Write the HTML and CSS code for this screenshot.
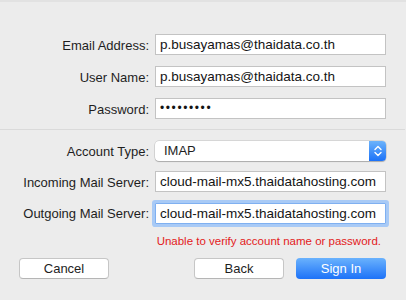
FILE: index.html
```html
<!DOCTYPE html>
<html>
  <head>
    <meta charset="UTF-8">
    <title>Add Account</title>
    <link rel="stylesheet" href="styles.css">
  </head>
  <body>
    <main class="sheet">
      <section class="sheet__group">
        <label class="sheet__label">Email Address:</label>
        <div class="sheet__field">p.busayamas@thaidata.co.th</div>
        <label class="sheet__label">User Name:</label>
        <div class="sheet__field">p.busayamas@thaidata.co.th</div>
        <label class="sheet__label">Password:</label>
        <div class="sheet__field sheet__field--secret">&bull;&bull;&bull;&bull;&bull;&bull;&bull;&bull;&bull;</div>
      </section>

      <hr class="sheet__rule">

      <section class="sheet__group sheet__group--server">
        <label class="sheet__label">Account Type:</label>
        <div class="popup">
          <span class="popup__value">IMAP</span>
          <span class="popup__stepper">
            <svg viewBox="0 0 16 20" width="16" height="20">
              <path d="M5 8.5 L8 5.5 L11 8.5 M5 11.5 L8 14.5 L11 11.5" fill="none" stroke="#fff" stroke-width="1.4" stroke-linecap="round" stroke-linejoin="round"/>
            </svg>
          </span>
        </div>
        <label class="sheet__label">Incoming Mail Server:</label>
        <div class="sheet__field">cloud-mail-mx5.thaidatahosting.com</div>
        <label class="sheet__label">Outgoing Mail Server:</label>
        <div class="sheet__field sheet__field--focus">cloud-mail-mx5.thaidatahosting.com</div>
      </section>

      <p class="sheet__error">Unable to verify account name or password.</p>

      <footer class="sheet__buttons">
        <button class="btn">Cancel</button>
        <span class="sheet__spacer"></span>
        <button class="btn">Back</button>
        <button class="btn btn--default">Sign In</button>
      </footer>
    </main>
  </body>
</html>
```

FILE: styles.css
```css
* {
  box-sizing: border-box;
}
body {
  margin: 0;
  background-color: #ececec;
  font-family: "Liberation Sans", Arial, sans-serif;
  font-size: 13px;
  color: #1e1e1e;
  height: 300px;
  overflow: hidden;
}
.sheet {
  border-top: solid 2px #e2e2e2;
  padding: 32px 20px 0 19px;
}

.sheet__group {
  display: grid;
  grid-template-columns: 130px 231px;
  column-gap: 6px;
  row-gap: 11px;
  align-items: center;
}
.sheet__group--server {
  row-gap: 10px;
  margin-top: 11px;
}
.sheet__label {
  text-align: right;
  white-space: nowrap;
  padding-top: 1px;
}
.sheet__field {
  height: 21px;
  line-height: 19px;
  background-color: #fff;
  border: solid 1px #c3c3c3;
  padding: 0 4px;
  font-size: 13.5px;
  color: #141414;
  white-space: nowrap;
  overflow: hidden;
}
.sheet__field--secret {
  letter-spacing: 1.6px;
  font-size: 12px;
}
.sheet__field--focus {
  border-color: #7fb0f1;
  border-radius: 1px;
  box-shadow: 0 0 0 3px #a8caf6;
  height: 21px;
  margin-top: 1px;
}

.sheet__rule {
  margin: 10px -19px 0 -19px;
  border: none;
  border-top: solid 1px #dadada;
}

.popup {
  display: flex;
  height: 20px;
  background-color: #fff;
  border-radius: 4px;
  box-shadow: 0 0 0 0.5px rgba(0,0,0,0.18), 0 1px 1px rgba(0,0,0,0.2);
  overflow: hidden;
}
.popup__value {
  flex: 1;
  padding-left: 9px;
  line-height: 20px;
}
.popup__stepper {
  width: 17px;
  background: linear-gradient(#6cb3fb, #1c72f8);
  display: flex;
  align-items: center;
  justify-content: center;
}

.sheet__error {
  margin: 11px 5px 0 0;
  text-align: right;
  color: #e3201b;
  font-size: 11.5px;
  line-height: 13px;
}

.sheet__buttons {
  display: flex;
  gap: 12px;
  margin-top: 10px;
}
.sheet__spacer {
  flex: 1;
}
.btn {
  width: 90px;
  height: 21px;
  border: solid 1px #c6c6c6;
  border-bottom-color: #b5b5b5;
  border-radius: 4px;
  background-color: #fff;
  font-family: "Liberation Sans", Arial, sans-serif;
  font-size: 13px;
  color: #1e1e1e;
  padding: 0;
}
.btn--default {
  border: none;
  background: linear-gradient(#6ab2fd, #1d72f8);
  color: #fff;
}
```
